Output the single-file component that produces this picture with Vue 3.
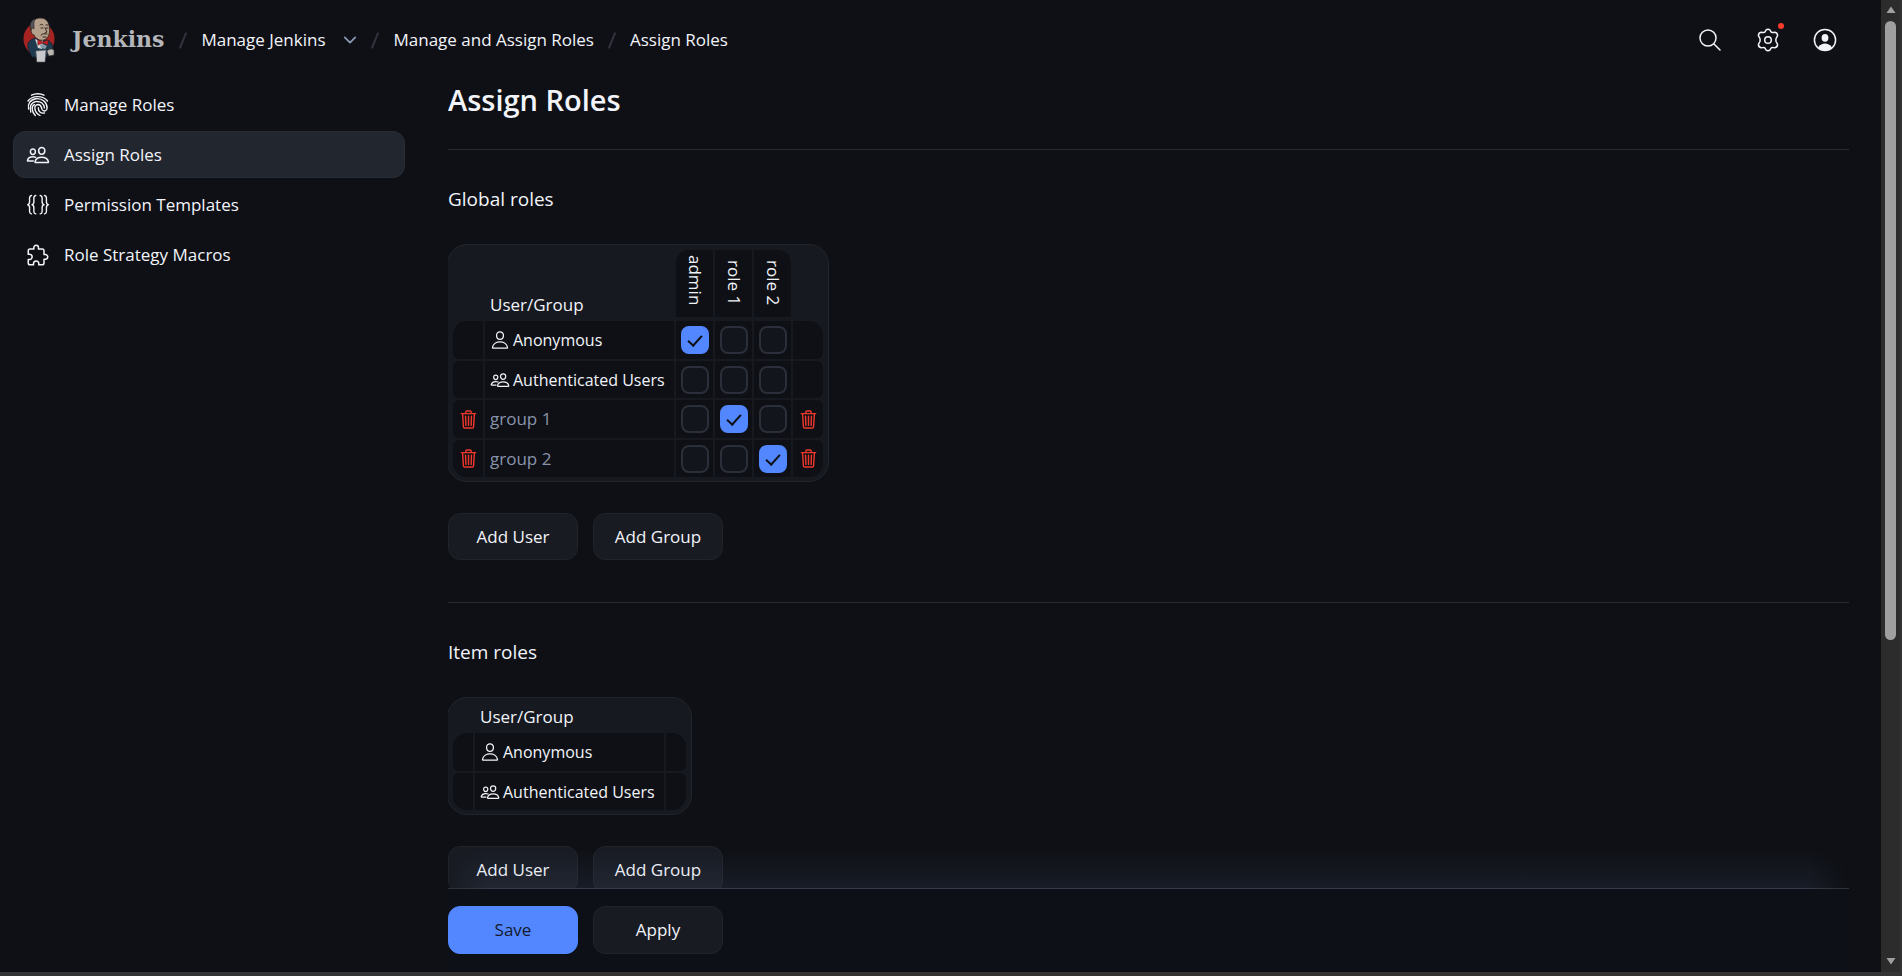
<template>
  <div class="window">
    <div class="page">
      <header class="header">
        <a href="#" class="brand">
          <svg class="brand-logo" viewBox="0 0 32 46" aria-hidden="true">
            <ellipse cx="16" cy="22" rx="15.5" ry="16.5" fill="#a52422" />
            <path d="M5 31C4 26 6 23 12 21l5 3 7-1c4 1 6 5 6 9l-3 2-2-2-1 8H9z" fill="#1f3a4e" stroke="#14202c" stroke-width=".7" />
            <path d="M12 22l5 2 3-1-1 9-4-1z" fill="#d3d3d5" />
            <path d="M8 13C7 5 12 1 17 1c7 0 9 5 9.500 10 .3 5-.5 10-5.500 12-4 1-8-1-10-5-2 0-3-3-3-5z" fill="#b5a08b" stroke="#30261f" stroke-width=".8" />
            <path d="M8 12c-2-4 0-9 4-10l-1 3 0 7-2-1z" fill="#55565a" stroke="#28282b" stroke-width=".6" />
            <path d="M17 8c1-1 2-1 3 0M23 8l2 0M18 11h2M23 11h2M22 11l2 4-2 1M18 18c2-2 4-1 6-1M20 20h3" fill="none" stroke="#30261f" stroke-width="1" />
            <path d="M15 23l5 2 5-2v5l-5-2-5 2z" fill="#c62328" stroke="#571112" stroke-width=".5" />
            <path d="M17 28l3-1 4 2-2 3-4-1z" fill="#8596a5" />
            <path d="M13 34l10-1-1 12h-8z" fill="#c8c9cc" stroke="#55585d" stroke-width=".6" />
            <path d="M24 34c2-2 4-3 7-1v5l-5 1z" fill="#b9b6b2" stroke="#3a3a3a" stroke-width=".7" />
          </svg>
          <span class="brand-name">Jenkins</span>
        </a>

        <nav class="breadcrumbs" aria-label="Breadcrumb">
          <span class="slash" aria-hidden="true"></span>
          <a href="#">Manage Jenkins</a>
          <button type="button" class="chevron" aria-label="Manage Jenkins menu">
            <svg viewBox="0 0 16 10"><path d="M2 2l6 6 6-6" /></svg>
          </button>
          <span class="slash" aria-hidden="true"></span>
          <a href="#">Manage and Assign Roles</a>
          <span class="slash" aria-hidden="true"></span>
          <a href="#" aria-current="page">Assign Roles</a>
        </nav>

        <div class="actions">
          <button type="button" aria-label="Search">
            <svg viewBox="0 0 24 24">
              <circle cx="9" cy="10" r="8" />
              <path d="M15 16l6 6" />
            </svg>
          </button>
          <button type="button" aria-label="Manage Jenkins">
            <svg viewBox="0 0 24 24">
              <path d="M9.800 2.300Q12 .2 14.200 2.300L14.900 3.800Q15.700 4.700 17 4.400L18.900 4.200Q21.800 4.900 21.500 7.900L20.300 10Q19.400 12 20.300 14L21.500 16.100Q21.800 19.100 18.900 19.800L17 19.600Q15.700 19.300 14.900 20.200L14.200 21.700Q12 23.800 9.800 21.700L9.100 20.200Q8.300 19.300 7 19.600L5.100 19.800Q2.200 19.100 2.500 16.100L3.700 14Q4.600 12 3.700 10L2.500 7.900Q2.200 4.900 5.100 4.200L7 4.400Q8.300 4.700 9.100 3.800z" />
              <circle cx="12" cy="12" r="3.300" />
            </svg>
            <span class="alert-dot"></span>
          </button>
          <button type="button" aria-label="User">
            <svg viewBox="0 0 24 24">
              <circle cx="12" cy="12" r="10.600" />
              <ellipse class="solid" cx="12" cy="9.800" rx="3.400" ry="3.900" />
              <path class="solid" d="M5 19.500c2-3 4.500-4 7-4s5 1 7 4c-2 2-4.500 3-7 3s-5-1-7-3z" />
            </svg>
          </button>
        </div>
      </header>

      <div class="columns">
        <nav class="sidebar" aria-label="Roles">
          <a
            v-for="item in menu"
            :key="item.label"
            href="#"
            class="task"
            :class="{ active: item.active }"
          >
            <svg :viewBox="item.box" :class="item.icon">
              <path v-for="d in icons[item.icon]" :key="d" :d="d" />
            </svg>
            <span>{{ item.label }}</span>
          </a>
        </nav>

        <main class="main">
          <div class="content">
            <h1>Assign Roles</h1>

            <section v-for="section in sections" :key="section.title">
              <h2>{{ section.title }}</h2>

              <table :class="{ compact: !section.roles.length }">
                <thead>
                  <tr>
                    <td class="edge"></td>
                    <th scope="col" class="name">User/Group</th>
                    <th v-for="role in section.roles" :key="role" scope="col" class="role">
                      <span>{{ role }}</span>
                    </th>
                    <td class="edge"></td>
                  </tr>
                </thead>
                <tbody>
                  <tr v-for="row in section.rows" :key="row.name">
                    <td class="edge">
                      <button v-if="!row.icon" type="button" class="remove" :aria-label="'Remove ' + row.name">
                        <svg viewBox="0 0 512 512">
                          <path v-for="d in icons.trash" :key="d" :d="d" />
                        </svg>
                      </button>
                    </td>
                    <th scope="row" class="name" :class="{ muted: !row.icon }">
                      <div class="sid">
                        <svg v-if="row.icon" viewBox="0 0 512 512">
                          <path v-for="d in icons[row.icon]" :key="d" :d="d" />
                        </svg>
                        <span>{{ row.name }}</span>
                      </div>
                    </th>
                    <td v-for="role in section.roles" :key="role" class="check">
                      <input
                        v-model="row.granted"
                        type="checkbox"
                        :value="role"
                        :aria-label="role + ' for ' + row.name"
                      />
                    </td>
                    <td class="edge">
                      <button v-if="!row.icon" type="button" class="remove" :aria-label="'Remove ' + row.name">
                        <svg viewBox="0 0 512 512">
                          <path v-for="d in icons.trash" :key="d" :d="d" />
                        </svg>
                      </button>
                    </td>
                  </tr>
                </tbody>
              </table>

              <div class="buttons">
                <button type="button" class="btn">Add User</button>
                <button type="button" class="btn">Add Group</button>
              </div>
            </section>
          </div>

          <div class="bottom-bar buttons">
            <button type="button" class="btn primary">Save</button>
            <button type="button" class="btn">Apply</button>
          </div>
        </main>
      </div>
    </div>

    <div class="scrollbar" aria-hidden="true">
      <svg viewBox="0 0 10 8"><path d="M5 0.500L9.500 7h-9z" /></svg>
      <div class="track">
        <div class="thumb"></div>
      </div>
      <svg viewBox="0 0 10 8"><path d="M5 7.500L.5 1h9z" /></svg>
    </div>
  </div>
</template>

<script setup>
import { reactive } from 'vue'

const menu = [
  { label: 'Manage Roles', icon: 'fingerprint', box: '0 0 24 24' },
  { label: 'Assign Roles', icon: 'people', box: '0 0 512 512', active: true },
  { label: 'Permission Templates', icon: 'braces', box: '0 0 24 24' },
  { label: 'Role Strategy Macros', icon: 'puzzle', box: '0 0 512 512' },
]

const sections = reactive([
  {
    title: 'Global roles',
    roles: ['admin', 'role 1', 'role 2'],
    rows: [
      { name: 'Anonymous', icon: 'person', granted: ['admin'] },
      { name: 'Authenticated Users', icon: 'people', granted: [] },
      { name: 'group 1', granted: ['role 1'] },
      { name: 'group 2', granted: ['role 2'] },
    ],
  },
  {
    title: 'Item roles',
    roles: [],
    rows: [
      { name: 'Anonymous', icon: 'person', granted: [] },
      { name: 'Authenticated Users', icon: 'people', granted: [] },
    ],
  },
])

const icons = {
  fingerprint: [
    'M5.500 2.200C9 .3 14.500 .3 18 2.200',
    'M2 8C6 2.300 17 2 21.500 8',
    'M2.600 16C1.500 11.500 4 6.500 9.800 5.700c6.600-.8 11.400 4 11.300 9.300 0 3-3.600 4-5 1.500-1-2-.4-4.700-4-5-2.500 0-3.600 2-3.200 4.300.5 3 2.300 5.200 5.100 6.700',
    'M4.800 19C3.500 14.500 4.300 9.500 9.800 8.600c5-.6 8.500 2.400 8.600 6.300',
    'M9.300 22.500C5.600 18.500 5 13 8.500 11.600',
    'M12.300 14.800c0 3.700 2.300 5.900 6.200 5.200',
  ],
  people: [
    'M402 168c-2.930 40.670-33.100 72-66 72s-63.120-31.320-66-72c-3-42.310 26.370-72 66-72s69 30.460 66 72z',
    'M336 304c-65.170 0-127.840 32.370-143.540 95.410-2.080 8.340 3.150 16.590 11.720 16.590h263.650c8.570 0 13.770-8.250 11.720-16.590C463.850 335.360 401.180 304 336 304z',
    'M200 185.940c-2.340 32.480-26.720 58.060-53 58.060s-50.700-25.570-53-58.060C91.610 152.150 115.340 128 147 128s55.390 24.770 53 57.940z',
    'M206 306c-18.050-8.270-37.930-11.450-59-11.450-52 0-102.100 25.850-114.650 76.200-1.650 6.660 2.530 13.250 9.370 13.250H154',
  ],
  person: [
    'M344 144c-3.920 52.870-44 96-88 96s-84.150-43.120-88-96c-4-55 35-96 88-96s92 42 88 96z',
    'M256 304c-87 0-175.300 48-191.640 138.600C62.390 453.520 68.570 464 80 464h352c11.440 0 17.620-10.480 15.650-21.400C431.300 352 343 304 256 304z',
  ],
  braces: [
    'M5.500 2.500C2.800 2.800 3.600 5 3.600 8.500c0 2-.6 3-1.900 3.200 1.300.2 1.900 1.200 1.900 3.200 0 3.500-.8 5.700 1.900 6',
    'M9.800 2.500C7.100 2.800 7.900 5 7.900 8.500c0 2-.6 3-1.900 3.200 1.300.2 1.900 1.200 1.900 3.200 0 3.500-.8 5.700 1.900 6',
    'M14.200 2.500c2.700.3 1.900 2.500 1.900 6 0 2 .6 3 1.900 3.200-1.300.2-1.900 1.200-1.900 3.200 0 3.500.8 5.700-1.900 6',
    'M18.500 2.500c2.700.3 1.900 2.500 1.900 6 0 2 .6 3 1.900 3.200-1.300.2-1.900 1.200-1.900 3.200 0 3.500.8 5.700-1.900 6',
  ],
  puzzle: [
    'M413.660 246.100H386a2 2 0 01-2-2v-77.240A38.860 38.860 0 00345.140 128H267.900a2 2 0 01-2-2V98.340c0-27.140-21.500-49.860-48.640-50.330a49.530 49.530 0 00-50.400 49.510V126a2 2 0 01-2 2H87.620A39.740 39.740 0 0048 167.620V238a2 2 0 002 2h26.910c29.370 0 53.680 25.480 54.090 54.850.42 29.870-23.510 57.150-53.290 57.150H50a2 2 0 00-2 2v70.380A39.740 39.740 0 0087.620 464H158a2 2 0 002-2v-20.930c0-30.280 24.750-56.350 55-57.060 30.100-.7 57 20.310 57 50.280V462a2 2 0 002 2h71.140A38.860 38.860 0 00384 425.140v-78a2 2 0 012-2h28.480c27.630 0 49.520-22.670 49.520-50.400s-23.200-48.640-50.340-48.640z',
  ],
  trash: [
    'M112 112l20 320c.95 18.490 14.400 32 32 32h184c17.670 0 30.870-13.510 32-32l20-320',
    'M80 112h352',
    'M192 112V72a23.930 23.930 0 0124-24h80a23.930 23.930 0 0124 24v40M256 176v224M184 176l8 224M328 176l-8 224',
  ],
}
</script>

<style>
body {
  background: #0e1015;
}
</style>

<style scoped>
* {
  box-sizing: border-box;
}

.window {
  display: flex;
  height: 100vh;
  border-bottom: 4px solid #343434;
  background: #0e1015;
  color: #f2f4fa;
  font-family: 'Open Sans', 'Noto Sans', sans-serif;
  font-size: 17px;
  line-height: 24px;
  overflow: hidden;
}

.page {
  flex: 1;
  min-width: 0;
  display: flex;
  flex-direction: column;
}

a {
  color: inherit;
  text-decoration: none;
}

button {
  font: inherit;
  color: inherit;
  background: none;
  border: 0;
  padding: 0;
  cursor: pointer;
}

svg {
  display: block;
  flex: none;
  fill: none;
  stroke: currentColor;
  stroke-linecap: round;
  stroke-linejoin: round;
}

/* Header */
.header {
  flex: none;
  display: flex;
  align-items: center;
  height: 80px;
  padding: 0 40px 0 23px;
}

.brand {
  display: flex;
  align-items: center;
  gap: 17px;
}

.brand-logo {
  width: 32px;
  height: 46px;
  stroke: none;
}

.brand-name {
  padding-bottom: 2px;
  font-family: 'DejaVu Serif', serif;
  font-size: 22px;
  font-weight: bold;
  color: #b4b6ba;
}

.breadcrumbs {
  display: flex;
  align-items: center;
  gap: 14px;
  margin-left: 15px;
}

.slash {
  width: 2px;
  height: 17px;
  margin: 0 3px;
  background: #31343e;
  transform: rotate(22deg);
}

.chevron {
  margin-left: 4px;
}

.chevron svg {
  width: 14px;
  height: 10px;
  stroke: #8b9bb8;
  stroke-width: 2;
}

.actions {
  display: flex;
  gap: 25px;
  margin-left: auto;
}

.actions button {
  position: relative;
  display: flex;
  align-items: center;
  justify-content: center;
  width: 32px;
  height: 32px;
}

.actions svg {
  width: 24px;
  height: 24px;
  stroke-width: 1.5;
}

.actions .solid {
  fill: currentColor;
  stroke: none;
}

.alert-dot {
  position: absolute;
  top: -1px;
  right: 0;
  width: 6px;
  height: 6px;
  border-radius: 50%;
  background: #ff3b2d;
}

/* Sidebar */
.columns {
  flex: 1;
  min-height: 0;
  display: flex;
  gap: 43px;
  padding: 0 32px 0 13px;
}

.sidebar {
  flex: none;
  display: flex;
  flex-direction: column;
  gap: 3px;
  width: 392px;
  padding-top: 1px;
}

.task {
  display: flex;
  align-items: center;
  gap: 14px;
  height: 47px;
  padding: 0 12px;
  border: 1px solid transparent;
  border-radius: 12px;
}

.task.active {
  background: #22262e;
  border-color: #292d35;
}

.task svg {
  width: 24px;
  height: 24px;
  stroke-width: 32;
}

.task .fingerprint,
.task .braces {
  stroke-width: 1.4;
}

/* Main column */
.main {
  flex: 1;
  min-width: 0;
  display: flex;
  flex-direction: column;
}

.content {
  flex: 1;
  min-height: 0;
  overflow: hidden;
}

h1 {
  margin: 0 0 29px;
  font-size: 29px;
  font-weight: 600;
  line-height: 40px;
}

section {
  padding-top: 35px;
  padding-bottom: 42px;
  border-top: 1px solid #282b33;
}

h2 {
  margin: 0 0 31px;
  font-size: 19px;
  font-weight: 400;
  line-height: 28px;
}

table {
  margin: 0 0 31px -1px;
  padding: 3px 3px 2px;
  border: 1px solid #22252c;
  border-radius: 20px;
  border-collapse: separate;
  border-spacing: 2px;
  background: #161920;
}

th,
td {
  height: 38px;
  padding: 0;
  font-weight: 400;
  text-align: left;
}

tbody th,
tbody td {
  background: #0e1015;
}

tbody th {
  font-size: 16px;
}

tbody tr:nth-child(even) > * {
  height: 37px;
}

thead th,
thead td {
  height: 69px;
  border-bottom: 2px solid transparent;
  background-clip: padding-box;
  vertical-align: bottom;
}

.compact thead th,
.compact thead td {
  height: 28px;
}

.edge {
  width: 30px;
}

.compact .edge {
  width: 20px;
}

.name {
  width: 189px;
  padding: 0 5px;
  white-space: nowrap;
}

.muted {
  color: #8a93aa;
  font-size: 17px;
}

.role {
  width: 37px;
  padding-bottom: 12px;
  background-color: #0e1015;
}

.role span {
  display: block;
  margin: 0 auto;
  width: 24px;
  writing-mode: vertical-rl;
  text-align: right;
}

th.name + .role {
  border-top-left-radius: 12px;
}

.role:nth-last-child(2) {
  border-top-right-radius: 12px;
}

tbody .edge:first-child {
  border-radius: 6px 0 0 6px;
}

tbody .edge:last-child {
  border-radius: 0 6px 6px 0;
}

tbody tr:first-child .edge:first-child {
  border-top-left-radius: 14px;
}

tbody tr:first-child .edge:last-child {
  border-top-right-radius: 14px;
}

tbody tr:last-child .edge:first-child {
  border-bottom-left-radius: 14px;
}

tbody tr:last-child .edge:last-child {
  border-bottom-right-radius: 14px;
}

.sid {
  display: flex;
  align-items: center;
  gap: 3px;
}

.sid svg {
  width: 20px;
  height: 20px;
  stroke-width: 32;
}

.remove {
  display: block;
  margin: 0 auto;
  color: #f0382c;
}

.remove svg {
  width: 21px;
  height: 21px;
  stroke-width: 34;
}

.check input {
  appearance: none;
  display: flex;
  align-items: center;
  justify-content: center;
  width: 28px;
  height: 28px;
  margin: 0 auto;
  border: 2px solid #2b2f39;
  border-radius: 8px;
  background: #12151c;
}

.check input:checked {
  border-color: #5287ff;
  background: #5287ff;
}

.check input:checked::before {
  content: '';
  width: 6px;
  height: 12px;
  margin-bottom: 2px;
  border: solid #0e1015;
  border-width: 0 2px 2px 0;
  transform: rotate(42deg);
}

.buttons {
  display: flex;
  gap: 15px;
}

.btn {
  width: 130px;
  height: 47px;
  border: 1px solid #20232a;
  border-radius: 12px;
  background: #181b22;
}

.btn.primary {
  border-color: #5287ff;
  background: #5287ff;
  color: #131a2c;
}

/* Save / Apply, pinned under the form */
.bottom-bar {
  position: relative;
  flex: none;
  padding: 17px 0 18px;
  border-top: 1px solid #2d3039;
  background: #0d1117;
}

.bottom-bar .btn {
  height: 48px;
}

.bottom-bar::before {
  content: '';
  position: absolute;
  right: 0;
  bottom: 100%;
  left: 0;
  height: 42px;
  background: linear-gradient(to top, rgba(120, 145, 200, 0.1), rgba(120, 145, 200, 0));
  mask-image: linear-gradient(to right, transparent, #000 40px, #000 calc(100% - 40px), transparent);
  pointer-events: none;
}

/* Scrollbar */
.scrollbar {
  flex: none;
  display: flex;
  flex-direction: column;
  align-items: center;
  gap: 7px;
  width: 21px;
  padding: 6px 0 7px;
  border-right: 2px solid #343434;
  background: #2c2c2c;
}

.scrollbar svg {
  width: 10px;
  height: 8px;
  fill: #9f9f9f;
  stroke: none;
}

.track {
  flex: 1;
  display: flex;
  flex-direction: column;
}

.track::after {
  content: '';
  flex: 1;
}

.thumb {
  flex: 2;
  width: 11px;
  border-radius: 6px;
  background: #9f9f9f;
}
</style>
